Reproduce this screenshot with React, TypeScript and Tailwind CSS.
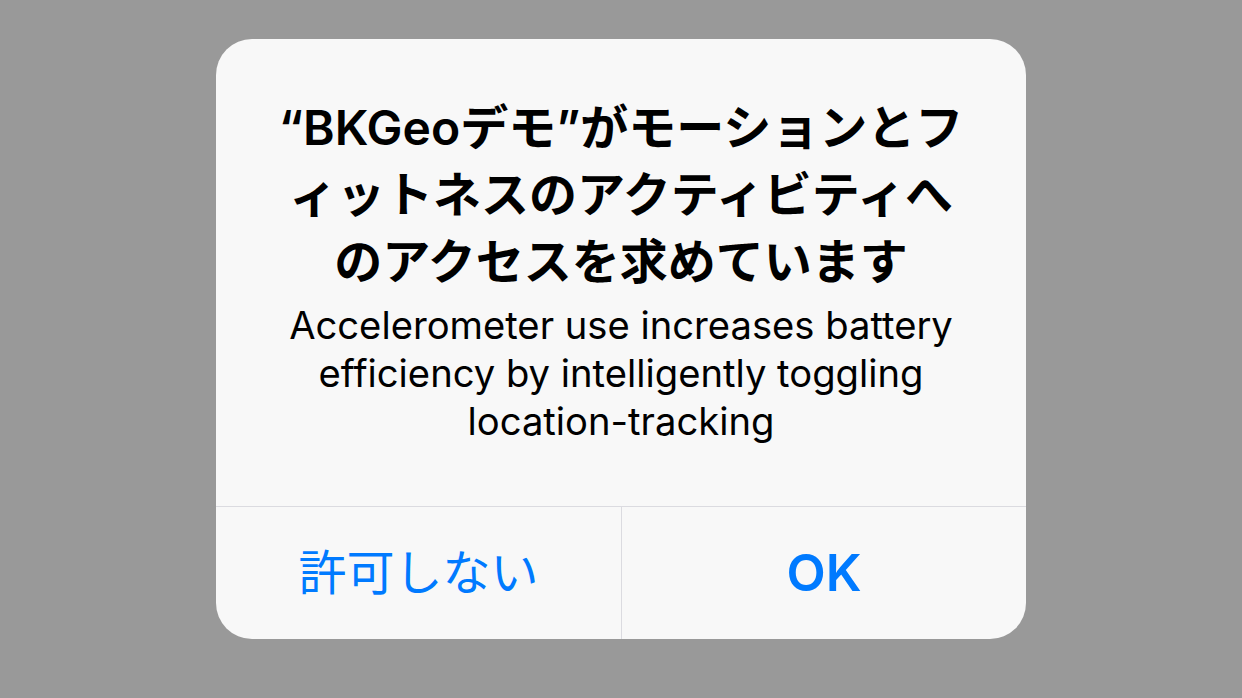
import React from "react";

export default function App() {
  const jp = { fontFamily: '"Inter", "Noto Sans CJK JP", sans-serif' };
  return (
    <div className="w-[1242px] h-[698px] bg-[#999999] flex justify-center overflow-hidden" style={jp}>
      <div className="mt-[39px] w-[810px] h-[600px] bg-[#f8f8f8] rounded-[36px] flex flex-col overflow-hidden">
        <div className="flex-1 flex flex-col items-center pt-[55px] px-[40px]">
          <div className="text-[48px] leading-[67px] font-semibold text-black text-center whitespace-nowrap">
            “BKGeoデモ”がモーションとフ<br />
            ィットネスのアクティビティへ<br />
            のアクセスを求めています
          </div>
          <div className="mt-[6px] text-[38.2px] leading-[48px] font-normal text-black text-center whitespace-nowrap">
            Accelerometer use increases battery<br />
            efficiency by intelligently toggling<br />
            location-tracking
          </div>
        </div>
        <div className="h-[133px] border-t border-[#dbdbe0] flex">
          <div className="w-[406px] border-r border-[#dbdbe0] flex items-center justify-center text-[48px] text-[#007aff]">
            許可しない
          </div>
          <div className="flex-1 flex items-center justify-center text-[51px] font-semibold text-[#007aff]">
            OK
          </div>
        </div>
      </div>
    </div>
  );
}
